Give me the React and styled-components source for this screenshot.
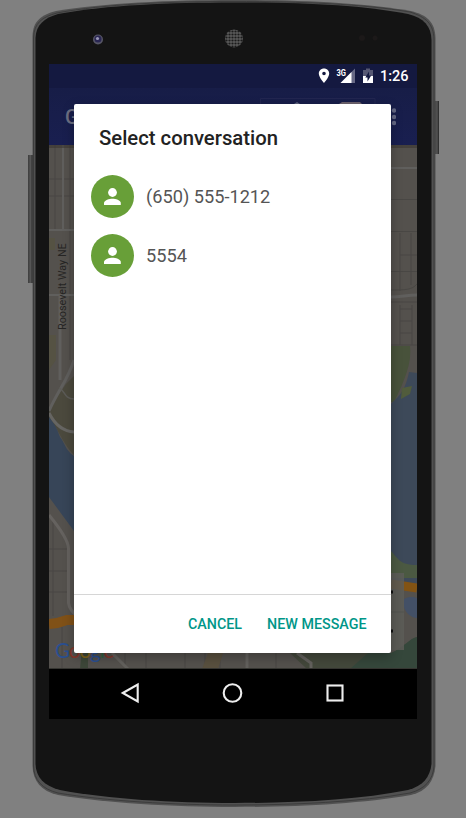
import React from "react";
import styled, { createGlobalStyle } from "styled-components";

const GlobalStyle = createGlobalStyle`
  * { box-sizing: border-box; }
  body { margin: 0; background: #808080; font-family: Roboto, sans-serif; }
`;

const Stage = styled.main`
  position: relative;
  width: 466px;
  height: 818px;
  padding: 64px 49px 0;
  overflow: hidden;
  background: #808080;
`;

const Casing = styled.svg`
  position: absolute;
  inset: 0;
`;

const Screen = styled.section`
  position: relative;
  display: flex;
  flex-direction: column;
  width: 368px;
  height: 655px;
  background: #000;
`;

const StatusBar = styled.header`
  display: flex;
  align-items: center;
  justify-content: flex-end;
  height: 24px;
  padding-right: 8.5px;
  background: #141940;
  color: #fff;
`;

const Clock = styled.time`
  width: 28.5px;
  margin-left: 5px;
  padding-top: 1px;
  font-size: 14.5px;
  font-weight: 500;
  line-height: 24px;
`;

const StatusIcons = styled.svg`
  display: block;
`;

const AppBar = styled.div`
  display: flex;
  align-items: center;
  justify-content: space-between;
  height: 57px;
  padding: 0 21px 0 16px;
  background: linear-gradient(#171d47, #191f50);
`;

const AppTitle = styled.span`
  color: #6c6f82;
  font-size: 20px;
  font-weight: 500;
`;

const OverflowIcon = styled.svg`
  display: block;
`;

const MapArea = styled.div`
  position: relative;
  height: 524px;
  background: #54514d;
  overflow: hidden;
`;

const MapDrawing = styled.svg`
  display: block;
`;

const StreetLabel = styled.span`
  position: absolute;
  left: 7px;
  top: 97px;
  width: 14px;
  height: 88px;
  writing-mode: vertical-rl;
  transform: rotate(180deg);
  color: #262524;
  font-size: 10.8px;
  line-height: 14px;
  white-space: nowrap;
`;

const MapLogo = styled.span`
  position: absolute;
  left: 6px;
  bottom: 7px;
  font-family: Lato, sans-serif;
  font-size: 20.5px;
  letter-spacing: -1px;
  line-height: 24px;
`;

const Letter = styled.span`
  color: ${({ $color }) => $color};
`;

const NavBar = styled.nav`
  display: flex;
  align-items: center;
  justify-content: space-between;
  height: 50px;
  padding: 0 70px 2px;
  background: #000;
`;

const NavIcon = styled.svg`
  display: block;
  fill: none;
  stroke: #eee;
  stroke-width: 2.1;
`;

const Dialog = styled.div`
  position: absolute;
  left: 25px;
  top: 40px;
  display: flex;
  flex-direction: column;
  width: 317px;
  height: 549px;
  border-radius: 2px;
  background: #fff;
  box-shadow: 0 4px 12px rgba(0, 0, 0, 0.28);
`;

const DialogTitle = styled.h1`
  margin: 0;
  padding: 20px 25px 0;
  color: #222;
  font-size: 20.3px;
  font-weight: 500;
  line-height: 28px;
`;

const ContactList = styled.ul`
  display: flex;
  flex: 1;
  flex-direction: column;
  gap: 16px;
  margin: 0;
  padding: 23px 16.5px 0;
  list-style: none;
`;

const Contact = styled.li`
  display: flex;
  align-items: center;
  gap: 12.5px;
  height: 43px;
  color: #555;
  font-size: 18.2px;
`;

const Avatar = styled.svg`
  display: block;
  flex: none;
`;

const Actions = styled.footer`
  display: flex;
  align-items: center;
  justify-content: flex-end;
  gap: 25px;
  height: 59px;
  padding-right: 24.5px;
  border-top: 1px solid #d6d6d6;
`;

const ActionButton = styled.button`
  padding: 0;
  border: 0;
  background: none;
  color: #009688;
  font: 500 14.3px Roboto, sans-serif;
`;

function PhoneCasing() {
  return (
    <Casing width="466" height="818" viewBox="0 0 466 818" aria-hidden="true">
      <defs>
        <pattern id="mesh" width="3" height="3" patternUnits="userSpaceOnUse">
          <rect width="3" height="3" fill="#595959" />
          <circle cx="1.500" cy="1.500" r="1.100" fill="#1b1b1b" />
        </pattern>
        <linearGradient id="key" x2="1">
          <stop stopColor="#3d3d3d" />
          <stop offset=".5" stopColor="#555" />
          <stop offset="1" stopColor="#252525" />
        </linearGradient>
      </defs>
      <rect x="28" y="155" width="5" height="128" fill="url(#key)" />
      <rect x="435" y="101" width="4" height="53" fill="url(#key)" />
      <path
        d="M32.500 36C33 21 41 15 56 11C104 3 170 0 234 0C302 0 363 3 411 11C427 15 435 22 435.500 38V766C434 781 427 791 411 795C360 804 295 807 234 807C173 807 105 803 58 795C41 791 33 781 32.500 766Z"
        fill="#515151"
      />
      <path
        d="M33.500 38C34 23 42 17 57 13C104 4 170 1.500 234 1.500C302 1.500 363 4 410 12C426 17 433.500 24 434 39V766C433 780 425 789 410 793C359 802 295 805 234 805C173 805 106 801 58 793C42 789 34 780 33.500 766Z"
        fill="none"
        stroke="#3c3c3c"
      />
      <path
        d="M35.500 38C36 25 44 18 58 14C106 5 170 2.500 234 2.500C302 2.500 361 5 408 14C424 18 431 26 431.500 40V764C430 777 423 786 408 790C358 800 295 803 234 803C173 803 108 799 60 790C44 786 36 777 35.500 764Z"
        fill="#141414"
      />
      <circle cx="98" cy="39.500" r="5" fill="#565565" />
      <circle cx="98" cy="39" r="3.500" fill="#292653" />
      <circle cx="97.500" cy="38.500" r="1.600" fill="#9997b7" />
      <circle cx="234" cy="38.500" r="9" fill="url(#mesh)" />
      <circle cx="362" cy="38" r="3" fill="#1c1919" />
      <circle cx="375" cy="38" r="2.500" fill="#1c1919" />
    </Casing>
  );
}

function Map() {
  return (
    <MapDrawing width="368" height="524" viewBox="49 145 368 524" aria-hidden="true">
      <g fill="none" stroke="#494744">
        <path d="M49 179H74M49 196H74M55 145V230M70 145V360M49 549H68M49 571H68M49 592H68M53 518V616M391 199.500H417M391 231.500H417M391 271.500H417M400 233V291M411 233V285M400 255H417M391 302H417M400 305V345M412 305V345M400 309H412M400 321H412M400 333H412M391 345H417M62 627V669" />
        <path d="M391 290C405 290 412 290 417 284M125 653V669M146 653V669M205 653V669M220 653V669M276 653V669M185 653V669" />
      </g>
      <path d="M49 238H55V250H49ZM49 335H56V360L49 370Z" fill="#555243" />
      <path d="M74 376L66 384L49 409V420C58 426 60 440 74 455Z" fill="#4b493d" />
      <g fill="none" stroke="#605f5d">
        <path d="M63 145V230M49 230H74M49 295H74M391 168H417" strokeWidth="2" />
        <path d="M60 295V380M391 297C401 297 407 295 417 295M74 360C68 380 57 392 49 411" strokeWidth="3" />
        <path d="M59 388C65 390 64 399 74 399" stroke="#5c5b57" strokeWidth="1.500" />
      </g>
      <path d="M49 417C55 424 57 429 60 437C65 443 65 450 74 456V531L49 497Z" fill="#374558" />
      <path d="M49 413C53 421 60 431 74 432" fill="none" stroke="#666562" strokeWidth="3" />
      <path d="M49 515C58 526 68 539 68.500 548V603C69 608 72 612 78 617" fill="none" stroke="#65625f" strokeWidth="3" />
      <path d="M49 624L57 623L67 620L74 620" fill="none" stroke="#805117" strokeWidth="10" />
      <path d="M391 346H410C412 362 405 380 394 402H391Z" fill="#48523b" />
      <path d="M391 404C400 395 405 391 409 372L417 373V585H391Z" fill="#3d4959" />
      <path d="M402 388L412 386L410 394L401 399Z" fill="#515c3c" />
      <path d="M391 551C398 558 399 565 417 565V578H391Z" fill="#4b5942" />
      <path d="M391 584L417 588" stroke="#825313" strokeWidth="9" />
      <path d="M404 599C409 596 414 597 417 598V618C411 618 405 612 404 607Z" fill="#435066" />
      <path d="M290 653H391C405 648 409 640 417 637V669H307Z" fill="#43483b" />
      <path d="M350 669L368 653H391C404 647 410 638 417 637V669Z" fill="#35473b" />
      <path d="M82 648H88V669H80Z" fill="#3d4739" />
      <path d="M112 653L128 669M247 653V669M297 653L311 663V669" fill="none" stroke="#63615d" strokeWidth="3" />
      <path d="M202 669L208 653H223L218 669Z" fill="#59503f" />
      <rect x="385" y="573" width="19" height="77" fill="#5d5d58" opacity=".85" />
      <path d="M391 612H404" stroke="#52544e" />
      <path d="M391 592H393M391 631H393" stroke="#111" strokeWidth="3" />
      <rect x="49" y="145" width="368" height="3" fill="#38352f" opacity=".55" />
      <rect x="49" y="668" width="368" height="1" fill="#353531" />
    </MapDrawing>
  );
}

const contacts = ["(650) 555-1212", "5554"];
const logoLetters = [
  ["G", "#2a4f91"],
  ["o", "#87372b"],
  ["o", "#80631a"],
  ["g", "#2a4f91"],
  ["l", "#306040"],
  ["e", "#87372b"],
];

export default function App() {
  return (
    <>
      <GlobalStyle />
      <Stage>
        <PhoneCasing />
        <Screen>
          <StatusBar>
            <StatusIcons width="58" height="24" viewBox="317 64 58 24" aria-label="Location, 3G, charging">
              <path d="M324 68.500C321 68.500 318.800 70.700 318.800 73.600C318.800 77.500 324 83 324 83S329.200 77.500 329.200 73.600C329.200 70.700 327 68.500 324 68.500ZM324 71.700A1.800 1.800 0 1 1 324 75.300A1.800 1.800 0 0 1 324 71.700Z" fill="#fff" fillRule="evenodd" />
              <path d="M340.500 83L355 68.500V83Z" fill="#676985" />
              <path d="M340.500 83L351.500 72V83Z" fill="#fff" />
              <text x="336.500" y="75.500" fill="#fff" stroke="#141940" strokeWidth=".6" paintOrder="stroke" fontFamily="Roboto, sans-serif" fontSize="9.500" fontWeight="700" textLength="9.500" lengthAdjust="spacingAndGlyphs">3G</text>
              <path d="M363 70H366V68.500H370V70H373V83H363Z" fill="#565873" />
              <path d="M363 76H373V83H363Z" fill="#fff" />
              <path d="M369 71.500L365.300 77.500H367.500V81.500L371.200 75.500H369Z" fill="#141940" />
            </StatusIcons>
            <Clock>1:26</Clock>
          </StatusBar>
          <AppBar>
            <AppTitle>G</AppTitle>
            <OverflowIcon width="136" height="57" viewBox="260 88 136 57" aria-label="More options">
              <path d="M260.500 104V98.500H375V104" fill="none" stroke="#222650" />
              <path d="M339 104L342 102H360L362 104Z" fill="#6c626d" />
              <path d="M294 104L297 102L300 104Z" fill="#5c617d" />
              <g fill="#656985"><circle cx="394" cy="110.500" r="2.200" /><circle cx="394" cy="117" r="2.200" /><circle cx="394" cy="123" r="2.200" /></g>
            </OverflowIcon>
          </AppBar>
          <MapArea>
            <Map />
            <StreetLabel>Roosevelt Way NE</StreetLabel>
            <MapLogo>
              {logoLetters.map(([letter, color], index) => (
                <Letter key={index} $color={color}>{letter}</Letter>
              ))}
            </MapLogo>
          </MapArea>
          <NavBar>
            <NavIcon width="22" height="24" aria-label="Back"><path d="M3.800 12L18.700 3.500V20.500Z" /></NavIcon>
            <NavIcon width="24" height="24" aria-label="Home"><circle cx="11.500" cy="12" r="8.800" /></NavIcon>
            <NavIcon width="22" height="24" aria-label="Recent apps"><rect x="2.500" y="4.500" width="15" height="15" /></NavIcon>
          </NavBar>
          <Dialog role="dialog" aria-label="Select conversation">
            <DialogTitle>Select conversation</DialogTitle>
            <ContactList>
              {contacts.map((number) => (
                <Contact key={number}>
                  <Avatar width="43" height="43" viewBox="0 0 43 43" aria-hidden="true">
                    <circle cx="21.500" cy="21.500" r="21.500" fill="#689f38" />
                    <circle cx="21.500" cy="17.500" r="4.400" fill="#fff" />
                    <path d="M13 30V28C13 25.200 18.500 23.700 21.500 23.700S29.800 25.200 29.800 28V30Z" fill="#fff" />
                  </Avatar>
                  {number}
                </Contact>
              ))}
            </ContactList>
            <Actions>
              <ActionButton>CANCEL</ActionButton>
              <ActionButton>NEW MESSAGE</ActionButton>
            </Actions>
          </Dialog>
        </Screen>
      </Stage>
    </>
  );
}
